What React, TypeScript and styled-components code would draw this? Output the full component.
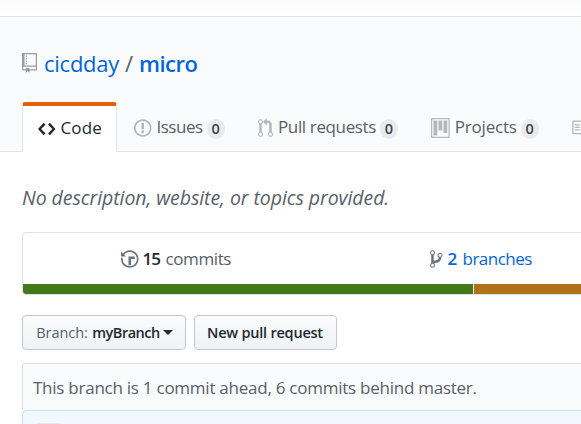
import React from 'react';
import styled, { createGlobalStyle } from 'styled-components';

const GlobalStyle = createGlobalStyle`
  *, *::before, *::after { box-sizing: border-box; }
  body {
    margin: 0;
    overflow: hidden;
    background: #fff;
    color: #24292e;
    font-family: "Open Sans", "Noto Sans", sans-serif;
  }
`;

const Page = styled.div`
  width: 581px;
  height: 424px;
  overflow: hidden;
  display: flex;
  flex-direction: column;
`;

const TopStrip = styled.div`
  flex: 0 0 17px;
  background: linear-gradient(#fbfcfe, #fff);
  border-bottom: 1px solid #e1e4e8;
`;

const RepoHead = styled.header`
  flex: 0 0 135px;
  display: flex;
  flex-direction: column;
  justify-content: space-between;
  background: #fafbfc;
  box-shadow: inset 0 -1px #e1e4e8;
`;

const Title = styled.h1`
  display: flex;
  align-items: center;
  height: 30px;
  margin: 31px 0 0 22px;
  font-size: 22px;
  font-weight: 400;
  line-height: 30px;
`;

const RepoIconBox = styled.span`
  display: flex;
  width: 22px;
  margin-top: -1px;
`;

const Owner = styled.a`
  width: 81px;
  color: #0366d6;
  letter-spacing: -0.25px;
`;

const Slash = styled.span`
  width: 14px;
  color: #586069;
`;

const RepoName = styled.a`
  color: #0366d6;
  font-weight: 600;
  letter-spacing: -0.5px;
`;

const Tabs = styled.nav`
  display: flex;
  height: 50px;
  padding-left: 22px;
`;

const Tab = styled.a<{ $width: number; $selected?: boolean }>`
  flex: 0 0 ${(p) => p.$width}px;
  display: flex;
  align-items: center;
  padding: 1px 0 0 ${(p) => (p.$selected ? 15 : 17)}px;
  white-space: nowrap;
  font-size: 17px;
  line-height: 24px;
  color: ${(p) => (p.$selected ? '#24292e' : '#586069')};
  ${(p) =>
    p.$selected &&
    `
    padding-top: 0;
    background: #fff;
    border: 1px solid #e1e4e8;
    border-top: 4px solid #e36209;
    border-bottom: 0;
    border-radius: 3px 3px 0 0;
  `}
`;

const Label = styled.span<{ $spacing: number }>`
  margin: 0 0 2px 5px;
  letter-spacing: ${(p) => p.$spacing}px;
`;

const Counter = styled.span`
  display: flex;
  align-items: center;
  justify-content: center;
  width: 18px;
  height: 20px;
  margin: 2px 0 0 4px;
  border-radius: 10px;
  background: #e9eaec;
  color: #3d444b;
  font-size: 14.5px;
  font-weight: 600;
  line-height: 20px;
`;

const Main = styled.main`
  flex: 1;
  width: 600px;
  padding-left: 22px;
`;

const Description = styled.p`
  height: 30px;
  margin: 31px 0 19px;
  color: #586069;
  font-size: 19.5px;
  font-style: italic;
  line-height: 30px;
  letter-spacing: -0.07px;
`;

const Summary = styled.section`
  height: 63px;
  border: 1px solid #dfe2e5;
  border-radius: 4px;
  overflow: hidden;
`;

const Stats = styled.div`
  display: flex;
  height: 51px;
`;

const Stat = styled.a<{ $inset: number; $link?: boolean }>`
  flex: 0 0 306px;
  display: flex;
  align-items: center;
  padding-left: ${(p) => p.$inset}px;
  color: ${(p) => (p.$link ? '#0366d6' : '#586069')};
  font-size: 17px;
  line-height: 24px;
`;

const StatNumber = styled.strong<{ $width: number; $link?: boolean }>`
  width: ${(p) => p.$width}px;
  margin-left: ${(p) => (p.$link ? 5 : 4)}px;
  color: ${(p) => (p.$link ? '#0366d6' : '#24292e')};
  font-weight: 600;
  letter-spacing: -0.9px;
`;

const StatLabel = styled.span<{ $spacing: number }>`
  letter-spacing: ${(p) => p.$spacing}px;
`;

const LanguageBar = styled.div`
  display: flex;
  gap: 1px;
  height: 10px;
`;

const Language = styled.span<{ $color: string; $width: number }>`
  flex: 0 0 ${(p) => p.$width}px;
  background: ${(p) => p.$color};
`;

const Actions = styled.div`
  display: flex;
  gap: 8px;
  margin: 20px 0 13px;
`;

const Button = styled.button<{ $width: number }>`
  display: flex;
  align-items: center;
  width: ${(p) => p.$width}px;
  height: 35px;
  padding: 0 0 0 12px;
  border: 1px solid #c5c9cd;
  border-radius: 4px;
  background: linear-gradient(#fafbfc, #eff3f6);
  color: #24292e;
  font: 600 14.5px/22px "Open Sans", "Noto Sans", sans-serif;
  letter-spacing: -0.22px;
  white-space: nowrap;
`;

const ButtonHint = styled.span`
  width: 54px;
  color: #586069;
  font-weight: 400;
  letter-spacing: -0.05px;
`;

const BranchName = styled.span`
  width: 74px;
  letter-spacing: -0.5px;
`;

const Caret = styled.span`
  border: 5px solid transparent;
  border-top-color: #24292e;
  border-bottom: 0;
`;

const BranchInfo = styled.div`
  height: 47px;
  padding: 12px 10px 0;
  border: 1px solid #dfe2e5;
  border-bottom: 0;
  border-radius: 4px 4px 0 0;
  background: #fafbfc;
  color: #586069;
  font-size: 17px;
  line-height: 24px;
  letter-spacing: -0.25px;
`;

const CommitTease = styled.div`
  height: 30px;
  padding: 12px 14px;
  border: 1px solid #c8e1ff;
  border-radius: 4px 4px 0 0;
  background: #f1f8ff;
`;

const Avatar = styled.div`
  width: 24px;
  height: 24px;
  border-radius: 3px;
  background: #f3e4e4;
`;

const icons = {
  repo: [12, 'M4 9H3V8h1v1zm0-3H3v1h1V6zm0-2H3v1h1V4zm0-2H3v1h1V2zm8-1v12c0 .55-.45 1-1 1H6v2l-1.5-1.5L3 16v-2H1c-.55 0-1-.45-1-1V1c0-.55.45-1 1-1h10c.55 0 1 .45 1 1zm-1 10H1v2h2v-1h3v1h5v-2zm0-10H2v9h9V1z'],
  code: [14, 'M9.5 3L8 4.5 11.5 8 8 11.5 9.5 13 14 8 9.5 3zm-5 0L0 8l4.5 5L6 11.5 2.5 8 6 4.5 4.5 3z'],
  issue: [14, 'M7 2.3c3.14 0 5.7 2.56 5.7 5.7s-2.56 5.7-5.7 5.7A5.71 5.71 0 0 1 1.3 8c0-3.14 2.56-5.7 5.7-5.7zM7 1C3.14 1 0 4.14 0 8s3.14 7 7 7 7-3.14 7-7-3.14-7-7-7zm1 3H6v5h2V4zm0 6H6v2h2v-2z'],
  pull: [12, 'M11 11.28V5c-.03-.78-.34-1.47-.94-2.06C9.46 2.35 8.78 2.03 8 2H7V0L4 3l3 3V4h1c.27.02.48.11.69.31.21.2.3.42.31.69v6.28A1.993 1.993 0 0 0 10 15a1.993 1.993 0 0 0 1-3.72zm-1 2.92c-.66 0-1.2-.55-1.2-1.2 0-.65.55-1.2 1.2-1.2.65 0 1.2.55 1.2 1.2 0 .65-.55 1.2-1.2 1.2zM4 3c0-1.11-.89-2-2-2a1.993 1.993 0 0 0-1 3.72v6.56A1.993 1.993 0 0 0 2 15a1.993 1.993 0 0 0 1-3.72V4.72c.59-.34 1-.98 1-1.72zm-.8 10c0 .66-.55 1.2-1.2 1.2-.65 0-1.2-.55-1.2-1.2 0-.65.55-1.2 1.2-1.2.65 0 1.2.55 1.2 1.2zM2 4.2C1.34 4.2.8 3.65.8 3c0-.65.55-1.2 1.2-1.2.65 0 1.2.55 1.2 1.2 0 .65-.55 1.2-1.2 1.2z'],
  project: [15, 'M10 12h3V2h-3v10zm-4-2h3V2H6v8zm-4 4h3V2H2v12zm-1 1h13V1H1v14zM14 0H1a1 1 0 0 0-1 1v14a1 1 0 0 0 1 1h13a1 1 0 0 0 1-1V1a1 1 0 0 0-1-1z'],
  wiki: [16, 'M3 5h4v1H3V5zm0 3h4V7H3v1zm0 2h4V9H3v1zm11-5h-4v1h4V5zm0 2h-4v1h4V7zm0 2h-4v1h4V9zm2-6v9c0 .55-.45 1-1 1H9.5l-1 1-1-1H2c-.55 0-1-.45-1-1V3c0-.55.45-1 1-1h5.5l1 1 1-1H15c.55 0 1 .45 1 1zm-8 .5L7.5 3H2v9h6V3.5zm7-.5H9.5l-.5.5V12h6V3z'],
  history: [14, 'M8 13H6V6h5v2H8v5zM7 1C4.81 1 2.87 2.02 1.59 3.59L0 2v4h4L2.5 4.5C3.55 3.17 5.17 2.3 7 2.3c3.14 0 5.7 2.56 5.7 5.7s-2.56 5.7-5.7 5.7A5.71 5.71 0 0 1 1.3 8c0-.34.03-.67.09-1H.08C.03 7.33 0 7.66 0 8c0 3.86 3.14 7 7 7s7-3.14 7-7-3.14-7-7-7z'],
  branch: [10, 'M10 5c0-1.11-.89-2-2-2a1.993 1.993 0 0 0-1 3.72v.3c-.02.52-.23.98-.63 1.38-.4.4-.86.61-1.38.63-.83.02-1.48.16-2 .45V4.72a1.993 1.993 0 0 0-1-3.72C.88 1 0 1.89 0 3a2 2 0 0 0 1 1.72v6.56c-.59.35-1 .99-1 1.72 0 1.11.89 2 2 2 1.11 0 2-.89 2-2 0-.53-.2-1-.53-1.36.09-.06.48-.41.59-.47.25-.11.56-.17.94-.17 1.05-.05 1.95-.45 2.75-1.25S8.95 7.77 9 6.73h-.02C9.59 6.37 10 5.73 10 5zM2 1.8c.66 0 1.2.55 1.2 1.2 0 .65-.55 1.2-1.2 1.2C1.35 4.2.8 3.65.8 3c0-.65.55-1.2 1.2-1.2zm0 12.41c-.66 0-1.2-.55-1.2-1.2 0-.65.55-1.2 1.2-1.2.65 0 1.2.55 1.2 1.2 0 .65-.55 1.2-1.2 1.2zm6-8c-.66 0-1.2-.55-1.2-1.2 0-.65.55-1.2 1.2-1.2.65 0 1.2.55 1.2 1.2 0 .65-.55 1.2-1.2 1.2z'],
} as const;

const Svg = styled.svg`
  flex: none;
  display: block;
`;

function Octicon({ name, color }: { name: keyof typeof icons; color: string }) {
  const [w, d] = icons[name];
  return (
    <Svg width={w * 1.25} height={20} viewBox={`0 0 ${w} 16`} fill={color} aria-hidden="true">
      <path fillRule="evenodd" d={d} />
    </Svg>
  );
}

export default function App() {
  const muted = '#b4b6b8';
  return (
    <Page>
      <GlobalStyle />
      <TopStrip />
      <RepoHead>
        <Title>
          <RepoIconBox><Octicon name="repo" color="#969ca2" /></RepoIconBox>
          <Owner>cicdday</Owner>
          <Slash>/</Slash>
          <RepoName>micro</RepoName>
        </Title>
        <Tabs>
          <Tab $width={95} $selected>
            <Octicon name="code" color="#24292e" />
            <Label $spacing={0.1}>Code</Label>
          </Tab>
          <Tab $width={124}>
            <Octicon name="issue" color={muted} />
            <Label $spacing={-0.5}>Issues</Label>
            <Counter>0</Counter>
          </Tab>
          <Tab $width={173}>
            <Octicon name="pull" color={muted} />
            <Label $spacing={-0.37}>Pull requests</Label>
            <Counter>0</Counter>
          </Tab>
          <Tab $width={140}>
            <Octicon name="project" color={muted} />
            <Label $spacing={-0.2}>Projects</Label>
            <Counter>0</Counter>
          </Tab>
          <Tab $width={120}>
            <Octicon name="wiki" color={muted} />
          </Tab>
        </Tabs>
      </RepoHead>
      <Main>
        <Description>No description, website, or topics provided.</Description>
        <Summary>
          <Stats>
            <Stat $inset={98}>
              <Octicon name="history" color="#6a737d" />
              <StatNumber $width={23}>15</StatNumber>
              <StatLabel $spacing={-0.4}>commits</StatLabel>
            </Stat>
            <Stat $inset={101} $link>
              <Octicon name="branch" color="#6a737d" />
              <StatNumber $width={15} $link>2</StatNumber>
              <StatLabel $spacing={-0.5}>branches</StatLabel>
            </Stat>
          </Stats>
          <LanguageBar>
            <Language $color="#427819" $width={450} />
            <Language $color="#b07219" $width={140} />
          </LanguageBar>
        </Summary>
        <Actions>
          <Button $width={164}>
            <ButtonHint>Branch:</ButtonHint>
            <BranchName>myBranch</BranchName>
            <Caret />
          </Button>
          <Button $width={143}>New pull request</Button>
        </Actions>
        <BranchInfo>This branch is 1 commit ahead, 6 commits behind master.</BranchInfo>
        <CommitTease><Avatar /></CommitTease>
      </Main>
    </Page>
  );
}
